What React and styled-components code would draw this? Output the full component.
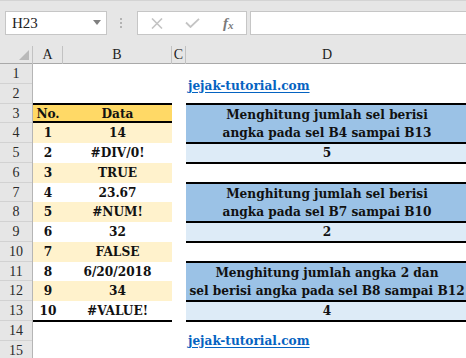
import styled, { createGlobalStyle } from 'styled-components';

const GlobalStyle = createGlobalStyle`
  html, body {
    margin: 0;
    padding: 0;
    background: #fff;
    overflow: hidden;
  }
  body {
    width: 466px;
    height: 358px;
    font-family: "Liberation Serif", serif;
  }
`;

const CELL_FONT = `"DejaVu Serif Condensed", "DejaVu Serif", serif`;
const COLS = '33px 30px 109px 14px 282px';
const ROW = 19.75;

const dataRows = [
  ['1', '14'],
  ['2', '#DIV/0!'],
  ['3', 'TRUE'],
  ['4', '23.67'],
  ['5', '#NUM!'],
  ['6', '32'],
  ['7', 'FALSE'],
  ['8', '6/20/2018'],
  ['9', '34'],
  ['10', '#VALUE!'],
];

const blocks = [
  { lines: ['Menghitung jumlah sel berisi', 'angka pada sel B4 sampai B13'], result: '5' },
  { lines: ['Menghitung jumlah sel berisi', 'angka pada sel B7 sampai B10'], result: '2' },
  { lines: ['Menghitung jumlah angka 2 dan', 'sel berisi angka pada sel B8 sampai B12'], result: '4' },
];

export default function App() {
  return (
    <>
      <GlobalStyle />
      <Window>
        <Toolbar>
          <NameBox>
            <span>H23</span>
            <Caret />
          </NameBox>
          <Grip>
            <i /><i /><i />
          </Grip>
          <FormulaButtons>
            <ToolBtn>
              <svg width="12" height="11" viewBox="0 0 12 11">
                <path d="M1 0.5 L11 10.5 M11 0.5 L1 10.5" stroke="#c4c4c4" strokeWidth="1.6" fill="none" />
              </svg>
            </ToolBtn>
            <ToolBtn>
              <svg width="15" height="10" viewBox="0 0 15 10">
                <path d="M1 4.5 L5.5 9 L14 0.8" stroke="#c4c4c4" strokeWidth="1.8" fill="none" />
              </svg>
            </ToolBtn>
            <ToolBtn>
              <Fx>f<sub>x</sub></Fx>
            </ToolBtn>
          </FormulaButtons>
          <FormulaInput />
        </Toolbar>

        <ColHeader>
          <Corner>
            <svg width="10" height="10" viewBox="0 0 10 10">
              <path d="M10 0 L10 10 L0 10 Z" fill="#b9b9b9" />
            </svg>
          </Corner>
          <ColName>A</ColName>
          <ColName>B</ColName>
          <ColName>C</ColName>
          <ColName $last>D</ColName>
        </ColHeader>

        <Sheet>
          <RowHeads>
            {Array.from({ length: 15 }, (_, i) => (
              <RowNum key={i}>{i + 1}</RowNum>
            ))}
          </RowHeads>

          <DataTable>
            <HeadRow>
              <Cell>No.</Cell>
              <Cell>Data</Cell>
            </HeadRow>
            {dataRows.map(([no, val], i) => (
              <DataRow key={no} $shade={i % 2 === 0} $last={i === dataRows.length - 1}>
                <Cell>{no}</Cell>
                <Cell>{val}</Cell>
              </DataRow>
            ))}
          </DataTable>

          <ResultCol>
            <Link>jejak-tutorial.com</Link>
            {blocks.map((b, i) => (
              <Block key={i}>
                <Title>
                  {b.lines.map((l) => (
                    <div key={l}>{l}</div>
                  ))}
                </Title>
                <Result>{b.result}</Result>
              </Block>
            ))}
            <Link $bottom>jejak-tutorial.com</Link>
          </ResultCol>
        </Sheet>
      </Window>
    </>
  );
}

const Window = styled.div`
  width: 466px;
  height: 358px;
  overflow: hidden;
  background: #fff;
`;

const Toolbar = styled.div`
  height: 46px;
  box-sizing: border-box;
  background: #e6e6e6;
  border-top: 1px solid #d4d4d4;
  display: flex;
  align-items: flex-start;
  padding: 10px 0 0 5px;
`;

const Box = styled.div`
  height: 24px;
  box-sizing: border-box;
  background: #fff;
  border: 1px solid #c6c6c6;
`;

const NameBox = styled(Box)`
  width: 102px;
  display: flex;
  align-items: center;
  justify-content: space-between;
  padding: 0 5px 0 6px;
  font-family: "Liberation Serif", serif;
  font-size: 15px;
  color: #222;
`;

const Caret = styled.span`
  width: 0;
  height: 0;
  border-left: 4px solid transparent;
  border-right: 4px solid transparent;
  border-top: 5px solid #7f7f7f;
  margin-top: -2px;
`;

const Grip = styled.div`
  width: 3px;
  margin: 7px 14px 0 13px;
  display: flex;
  flex-direction: column;
  gap: 2px;

  i {
    display: block;
    width: 2px;
    height: 2px;
    background: #b3b3b3;
  }
`;

const FormulaButtons = styled(Box)`
  width: 110px;
  display: flex;
  align-items: center;
  padding-left: 1px;
`;

const ToolBtn = styled.div`
  width: 36px;
  height: 100%;
  display: flex;
  align-items: center;
  justify-content: center;
`;

const Fx = styled.span`
  font-family: "Liberation Serif", serif;
  font-style: italic;
  font-weight: bold;
  font-size: 15px;
  color: #7a7a7a;
  line-height: 1;

  sub {
    font-size: 11px;
    vertical-align: -1px;
  }
`;

const FormulaInput = styled(Box)`
  flex: 1;
  margin-left: 3px;
  border-right: none;
`;

const ColHeader = styled.div`
  display: grid;
  grid-template-columns: ${COLS};
  height: 18px;
  box-sizing: border-box;
  background: #e6e6e6;
  border-bottom: 1px solid #a9a9a9;
`;

const Corner = styled.div`
  border-right: 1px solid #c2c2c2;
  display: flex;
  align-items: flex-end;
  justify-content: flex-end;
  padding: 0 3px 4px 0;
`;

const ColName = styled.div`
  border-right: ${(p) => (p.$last ? 'none' : '1px solid #c2c2c2')};
  text-align: center;
  font-size: 14px;
  line-height: 18px;
  color: #1e1e1e;
`;

const Sheet = styled.div`
  display: grid;
  grid-template-columns: ${COLS};
  align-items: start;
`;

const RowHeads = styled.div`
  display: flex;
  flex-direction: column;
  background: #e6e6e6;
  border-right: 1px solid #b5b5b5;
`;

const RowNum = styled.div`
  height: ${ROW}px;
  box-sizing: border-box;
  border-bottom: 1px solid #d2d2d2;
  text-align: center;
  font-size: 14px;
  line-height: ${ROW}px;
  color: #2a2a2a;
`;

const DataTable = styled.div`
  grid-column: 2 / 4;
  padding-top: ${2 * ROW - 1}px;
  font-family: ${CELL_FONT};
  font-weight: bold;
  font-size: 13.5px;
  color: #111;
`;

const Cell = styled.div`
  text-align: center;
  white-space: nowrap;
`;

const Row = styled.div`
  display: grid;
  grid-template-columns: 30px 109px;
  box-sizing: border-box;
`;

const HeadRow = styled(Row)`
  height: ${ROW + 1}px;
  line-height: ${ROW - 3}px;
  background: #ffd966;
  border-top: 2px solid #000;
  border-bottom: 2px solid #000;
`;

const DataRow = styled(Row)`
  height: ${(p) => (p.$last ? ROW + 1 : ROW)}px;
  line-height: ${(p) => (p.$last ? ROW - 1 : ROW)}px;
  background: ${(p) => (p.$shade ? '#fff2cc' : '#fff')};
  border-bottom: ${(p) => (p.$last ? '2px solid #000' : 'none')};
`;

const ResultCol = styled.div`
  grid-column: 5;
  display: flex;
  flex-direction: column;
  font-family: ${CELL_FONT};
  font-weight: bold;
  font-size: 13.5px;
  color: #111;
`;

const Link = styled.div`
  height: 20px;
  line-height: 20px;
  margin: ${(p) => (p.$bottom ? '7.75px 0 0' : '10.5px 0 8px')};
  padding-left: 2px;
  color: #0563c1;
  text-decoration: underline;
  text-underline-offset: 2px;
`;

const Block = styled.div`
  & + & {
    margin-top: ${2 * ROW - 21.75}px;
  }
  text-align: center;
  white-space: nowrap;
`;

const Title = styled.div`
  height: ${2 * ROW + 2}px;
  box-sizing: border-box;
  background: #9bc2e6;
  border-top: 2px solid #000;
  border-bottom: 2px solid #000;
  line-height: ${ROW - 1}px;
`;

const Result = styled.div`
  height: ${ROW}px;
  box-sizing: border-box;
  background: #ddebf7;
  border-bottom: 2px solid #000;
  line-height: ${ROW - 2}px;
`;
